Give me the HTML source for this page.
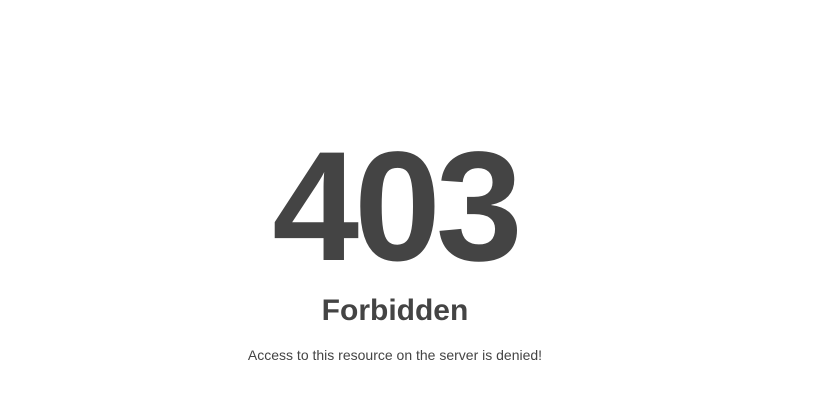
<!DOCTYPE html>
<html><head><style>
html,body{margin:0;padding:0;background:#fff;width:832px;height:404px;overflow:hidden;font-family:"Liberation Sans",Arial,sans-serif;color:#444}
.w{position:absolute;left:0;width:790px;text-align:center}
.n{top:117px;font-size:156px;font-weight:bold;line-height:180px;letter-spacing:-5px;height:180px}
.f{top:291px;font-size:30px;font-weight:bold;line-height:40px}
.t{top:346px;font-size:14px;line-height:18px}
</style></head><body>
<div class="w n">403</div>
<div class="w f">Forbidden</div>
<div class="w t">Access to this resource on the server is denied!</div>
</body></html>
